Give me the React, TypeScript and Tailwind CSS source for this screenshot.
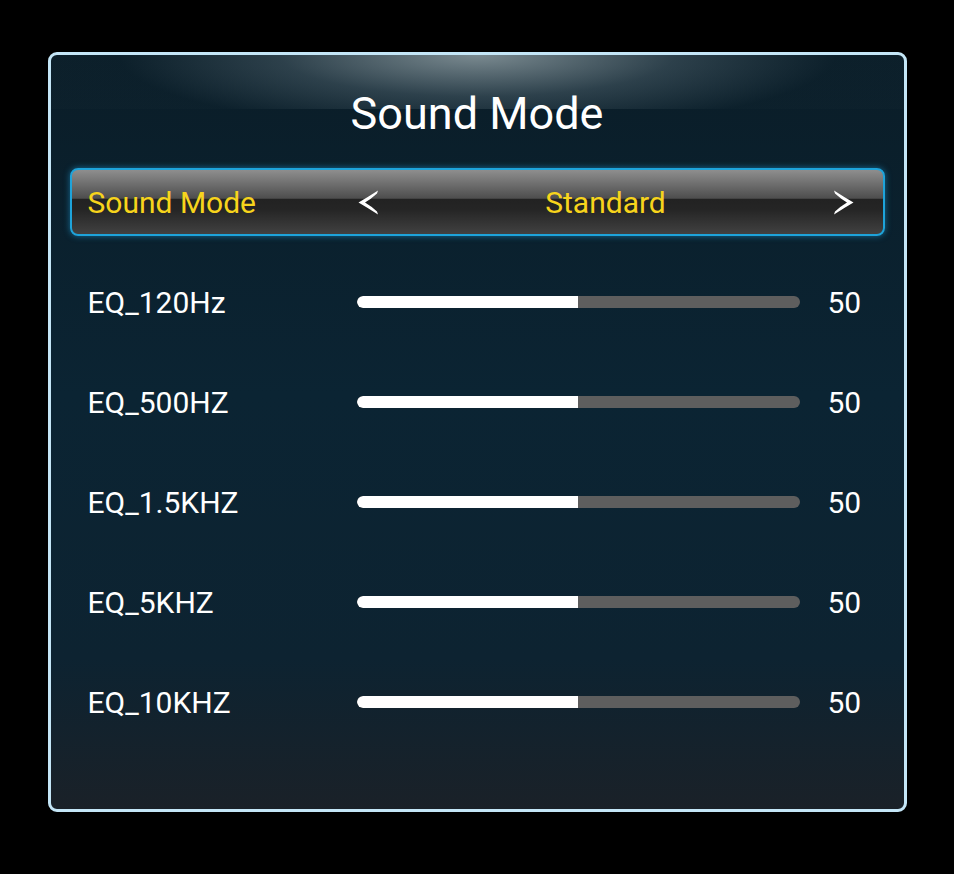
const bands = [
  { label: 'EQ_120Hz', value: 50 },
  { label: 'EQ_500HZ', value: 50 },
  { label: 'EQ_1.5KHZ', value: 50 },
  { label: 'EQ_5KHZ', value: 50 },
  { label: 'EQ_10KHZ', value: 50 },
];

function Chevron({ dir }: { dir: 'left' | 'right' }) {
  return (
    <svg width="21" height="25" viewBox="0 0 21 25" className={dir === 'right' ? 'rotate-180' : ''}>
      <path d="M20 0.5 Q10 7 0.5 12.5 Q10 18 20 24.5 L19 21.5 Q13 16 7 12.5 Q13 9 19 3.5 Z" fill="#ffffff" />
    </svg>
  );
}

function Slider({ value }: { value: number }) {
  return (
    <div className="h-[12px] w-[443px] overflow-hidden rounded-full bg-[#5e5e5e]">
      <div className="h-full rounded-l-full bg-white" style={{ width: `${value}%` }} />
    </div>
  );
}

export default function App() {
  return (
    <div className="min-h-[874px] bg-black pt-[52px] font-['Roboto',sans-serif]">
      <div className="mx-auto flex h-[760px] w-[859px] flex-col overflow-hidden rounded-[9px] border-[3px] border-[#c4e6f7] bg-[linear-gradient(to_bottom,#0a1d28_0%,#0b2433_45%,#0d2331_80%,#1a2128_100%)]">
        <div className="flex h-[113px] items-start justify-center bg-[radial-gradient(ellipse_42%_140%_at_50%_0%,rgba(150,165,170,0.8)_0%,rgba(110,130,140,0.35)_55%,rgba(30,50,60,0.12)_100%)] bg-[length:100%_54px] bg-no-repeat pt-[36px]">
          <h1 className="text-[45px] leading-none text-white">Sound Mode</h1>
        </div>

        <div className="px-[19px]">
          <div className="flex h-[68px] items-center rounded-[8px] border-2 border-[#1ea3da] bg-[linear-gradient(to_bottom,#8e8e8e_0%,#4e4e4e_44%,#222222_46%,#252525_62%,#414141_100%)] pr-[29px] pl-[16px] shadow-[0_0_6px_rgba(30,160,220,0.6)]">
            <span className="w-[270px] text-[30px] text-[#f7d41c]">Sound Mode</span>
            <Chevron dir="left" />
            <span className="flex-1 text-center text-[30px] text-[#f7d41c]">Standard</span>
            <Chevron dir="right" />
          </div>

          <div className="mt-[16px]">
            {bands.map((b) => (
              <div key={b.label} className="flex h-[100px] items-center pl-[18px]">
                <span className="w-[269px] text-[30px] text-white">{b.label}</span>
                <Slider value={b.value} />
                <span className="ml-[28px] text-[30px] text-white">{b.value}</span>
              </div>
            ))}
          </div>
        </div>
      </div>
    </div>
  );
}
